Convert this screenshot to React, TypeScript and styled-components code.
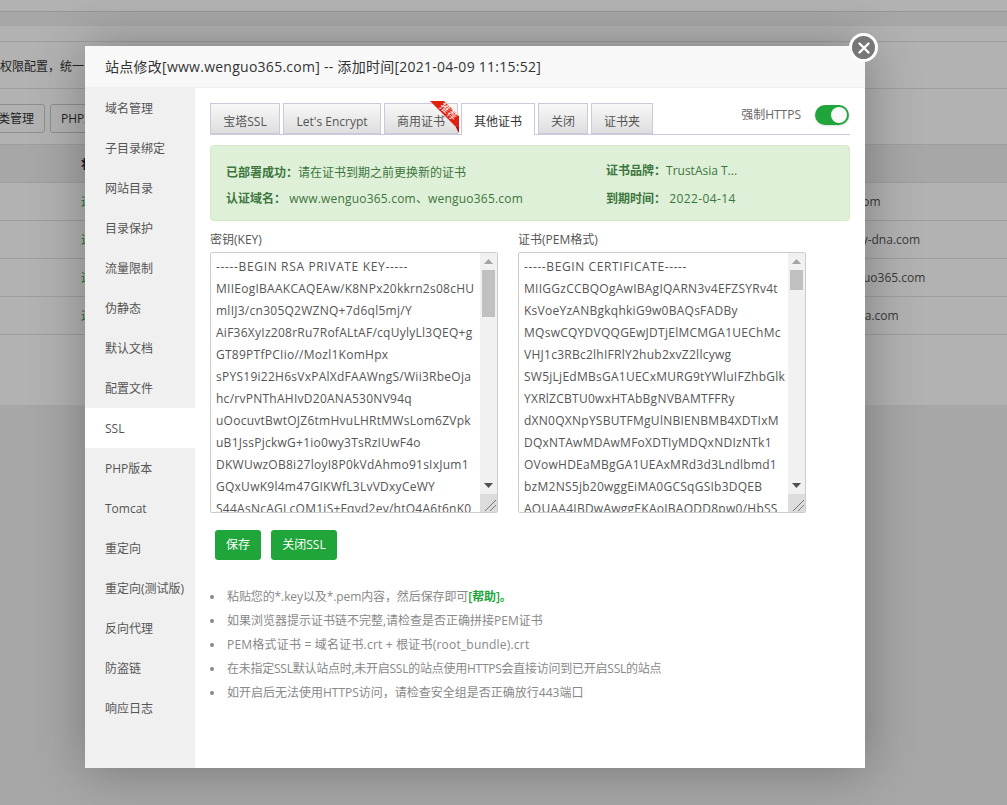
import React from "react";
import styled, { createGlobalStyle } from "styled-components";

const FONT = `"Open Sans", "Noto Sans CJK SC", sans-serif`;

const Global = createGlobalStyle`
  * { box-sizing: border-box; }
  html, body { margin: 0; padding: 0; background: #fff; }
  body { font-family: ${FONT}; font-size: 12px; color: #555; }
`;

const Page = styled.div`
  position: relative;
  height: 805px;
  overflow: hidden;
  background: #f0f0f0;
`;
const TopBar = styled.div`
  height: 12px;
  background: #fff;
  border-bottom: 1px solid #d8d8d8;
`;
const Crumb = styled.div`
  height: 14px;
  background: #f0f0f0;
`;
const SubBar = styled.div`
  height: 15px;
  background: #fff;
`;
const Content = styled.div`
  background: #fff;
  height: 364px;
`;
const Notice = styled.div`
  height: 48px;
  border-top: 1px solid #e2e2e2;
  border-bottom: 1px solid #e2e2e2;
  line-height: 49px;
  color: #333;
  white-space: nowrap;
`;
const Toolbar = styled.div`
  display: flex;
  gap: 5px;
  height: 55px;
  padding-top: 15px;
`;
const GhostButton = styled.div<{ $shift?: number }>`
  height: 29px;
  padding: 0 10px;
  margin-left: ${(p) => p.$shift ?? 0}px;
  border: 1px solid #ccc;
  border-radius: 3px;
  line-height: 27px;
  color: #333;
  white-space: nowrap;
`;
const HeadRow = styled.div`
  display: flex;
  height: 39px;
  padding-left: 81px;
  background: #f0f0f0;
  border-top: 1px solid #e2e2e2;
  border-bottom: 1px solid #e2e2e2;
  line-height: 39px;
  color: #224;
  font-weight: 600;
`;
const Row = styled.div`
  display: grid;
  grid-template-columns: 721px 1fr;
  height: 38px;
  padding-left: 81px;
  border-bottom: 1px solid #e2e2e2;
  line-height: 37px;
  white-space: nowrap;
`;
const RowStatus = styled.span`
  color: #20a53a;
`;
const RowDomain = styled.span`
  color: #555;
`;

const Overlay = styled.div`
  position: absolute;
  inset: 0;
  background: rgba(0, 0, 0, 0.3);
`;
const Modal = styled.div`
  position: absolute;
  left: 85px;
  top: 46px;
  width: 780px;
  height: 722px;
  background: #fff;
  box-shadow: 1px 1px 50px rgba(0, 0, 0, 0.3);
  display: flex;
  flex-direction: column;
`;
const Close = styled.div`
  position: absolute;
  right: -13px;
  top: -13px;
  width: 29px;
  height: 29px;
  border-radius: 50%;
  border: 3px solid #fff;
  background: #777;
  display: flex;
  align-items: center;
  justify-content: center;
`;
const Header = styled.div`
  height: 42px;
  flex: none;
  padding-left: 20px;
  background: #f8f8f8;
  border-bottom: 1px solid #eee;
  font-size: 14px;
  line-height: 41px;
  letter-spacing: 0.26px;
  color: #333;
  white-space: nowrap;
`;
const Body = styled.div`
  flex: 1;
  display: flex;
  min-height: 0;
`;
const Side = styled.div`
  width: 110px;
  flex: none;
  background: #f0f0f0;
`;
const SideItem = styled.div<{ $active?: boolean }>`
  height: 40px;
  padding-left: 20px;
  line-height: 42px;
  color: #555;
  background: ${(p) => (p.$active ? "#fff" : "transparent")};
`;
const Main = styled.div`
  flex: 1;
  min-width: 0;
  padding: 15px 15px 0;
`;
const Tabs = styled.div`
  display: flex;
  gap: 3px;
  height: 32px;
  border-bottom: 1px solid #ccc9dc;
`;
const Tab = styled.div<{ $active?: boolean; $w: number }>`
  position: relative;
  width: ${(p) => p.$w}px;
  height: ${(p) => (p.$active ? 32 : 31)}px;
  border: 1px solid #ccc9dc;
  border-bottom: ${(p) => (p.$active ? "none" : "1px solid #ccc9dc")};
  background: ${(p) => (p.$active ? "#fff" : "linear-gradient(#f8f8f8, #dedede)")};
  color: ${(p) => (p.$active ? "#333" : "#555")};
  text-align: center;
  line-height: 35px;
  white-space: nowrap;
`;
const Ribbon = styled.svg`
  position: absolute;
  right: -4px;
  top: -4px;
  width: 33px;
  height: 35px;
`;
const ForceHttps = styled.div`
  margin-left: auto;
  margin-right: 1px;
  display: flex;
  gap: 14px;
  height: 30px;
  align-items: flex-start;
  color: #666;
  line-height: 24px;
`;
const Switch = styled.div`
  position: relative;
  width: 34px;
  height: 20px;
  margin-top: 2px;
  border-radius: 20px;
  background: #20a53a;
  box-shadow: 0 1px 2px rgba(0, 0, 0, 0.15);
`;
const Knob = styled.span`
  position: absolute;
  right: 2px;
  top: 2px;
  width: 16px;
  height: 16px;
  border-radius: 50%;
  background: #fafafa;
`;
const Alert = styled.div`
  display: grid;
  grid-template-columns: 380px 1fr;
  height: 76px;
  margin-top: 10px;
  padding: 0 15px;
  background: #dff0d8;
  border: 1px solid #d6e9c6;
  border-radius: 4px;
  color: #3c763d;
  line-height: 26px;
  white-space: nowrap;
`;
const AlertCol = styled.div<{ $top: number }>`
  padding-top: ${(p) => p.$top}px;
`;
const AlertLine = styled.div<{ $h: number }>`
  height: ${(p) => p.$h}px;
`;
const AlertValue = styled.span<{ $tracking: number }>`
  letter-spacing: ${(p) => p.$tracking}px;
`;
const Editors = styled.div`
  display: flex;
  gap: 20px;
  margin-top: 9px;
`;
const Editor = styled.div`
  width: 288px;
`;
const EditorLabel = styled.div`
  height: 22px;
  line-height: 20px;
  color: #555;
`;
const PemBox = styled.div`
  position: relative;
  width: 288px;
  height: 261px;
  padding: 3px 22px 0 5px;
  border: 1px solid #ccc;
  border-radius: 2px;
  overflow: hidden;
  background: #fff;
`;
const PemLine = styled.div<{ $tracking: number }>`
  height: 22px;
  line-height: 22px;
  letter-spacing: ${(p) => p.$tracking}px;
  color: #555;
  white-space: nowrap;
`;
const Scroll = styled.div`
  position: absolute;
  right: 0;
  top: 0;
  bottom: 0;
  width: 17px;
  display: flex;
  flex-direction: column;
  background: #f1f1f1;
`;
const ScrollArrow = styled.div`
  height: 17px;
  flex: none;
  display: flex;
  align-items: center;
  justify-content: center;
`;
const ScrollTrack = styled.div`
  flex: 1;
  padding: 0 2px;
`;
const ScrollThumb = styled.div<{ $h: number }>`
  height: ${(p) => p.$h}px;
  background: #c1c1c1;
`;
const ScrollCorner = styled.div`
  height: 18px;
  flex: none;
  background: #dcdcdc;
  display: flex;
  align-items: flex-end;
  justify-content: flex-end;
`;
const Actions = styled.div`
  display: flex;
  gap: 10px;
  margin-top: 17px;
  padding-left: 5px;
`;
const Primary = styled.div<{ $w: number }>`
  width: ${(p) => p.$w}px;
  height: 30px;
  border-radius: 3px;
  background: #20a53a;
  color: #fff;
  text-align: center;
  line-height: 30px;
  white-space: nowrap;
`;
const Tips = styled.ul`
  margin: 25px 0 0;
  padding: 0;
  list-style: none;
  color: #888;
`;
const Tip = styled.li<{ $tracking?: number }>`
  height: 24px;
  line-height: 24px;
  white-space: nowrap;
  letter-spacing: ${(p) => p.$tracking ?? 0}px;

  &::before {
    content: "";
    display: inline-block;
    width: 4px;
    height: 4px;
    margin: 0 13px 1px 0;
    border-radius: 50%;
    background: #888;
    vertical-align: middle;
  }
`;
const Help = styled.span`
  color: #20a53a;
  font-weight: 600;
`;

type Line = [string, number];
const T = 0.26;
const keyLines: Line[] = [
  ["-----BEGIN RSA PRIVATE KEY-----", 0.65],
  ["MIIEogIBAAKCAQEAw/K8NPx20kkrn2s08cHU", T],
  ["mlIJ3/cn305Q2WZNQ+7d6ql5mj/Y", T],
  ["AiF36XyIz208rRu7RofALtAF/cqUylyLl3QEQ+g", T],
  ["GT89PTfPCIio//Mozl1KomHpx", T],
  ["sPYS19i22H6sVxPAlXdFAAWngS/Wii3RbeOja", T],
  ["hc/rvPNThAHIvD20ANA530NV94q", T],
  ["uOocuvtBwtOJZ6tmHvuLHRtMWsLom6ZVpk", T],
  ["uB1JssPjckwG+1io0wy3TsRzIUwF4o", T],
  ["DKWUwzOB8i27loyI8P0kVdAhmo91sIxJum1", T],
  ["GQxUwK9l4m47GIKWfL3LvVDxyCeWY", T],
  ["S44AsNcAGLcOM1iS+Fqvd2ey/htO4A6t6nK0", T],
];
const certLines: Line[] = [
  ["-----BEGIN CERTIFICATE-----", 0.6],
  ["MIIGGzCCBQOgAwIBAgIQARN3v4EFZSYRv4t", T],
  ["KsVoeYzANBgkqhkiG9w0BAQsFADBy", T],
  ["MQswCQYDVQQGEwJDTjElMCMGA1UEChMc", T],
  ["VHJ1c3RBc2lhIFRlY2hub2xvZ2llcywg", T],
  ["SW5jLjEdMBsGA1UECxMURG9tYWluIFZhbGlk", T],
  ["YXRlZCBTU0wxHTAbBgNVBAMTFFRy", T],
  ["dXN0QXNpYSBUTFMgUlNBIENBMB4XDTIxM", T],
  ["DQxNTAwMDAwMFoXDTIyMDQxNDIzNTk1", T],
  ["OVowHDEaMBgGA1UEAxMRd3d3Lndlbmd1", T],
  ["bzM2NS5jb20wggEiMA0GCSqGSIb3DQEB", T],
  ["AQUAA4IBDwAwggEKAoIBAQDD8pw0/HbSS", T],
];

const sideItems = ["域名管理","子目录绑定","网站目录","目录保护","流量限制","伪静态","默认文档","配置文件","SSL","PHP版本","Tomcat","重定向","重定向(测试版)","反向代理","防盗链","响应日志"];
const tabs: [string, number][] = [["宝塔SSL",70],["Let's Encrypt",98],["商用证书",74],["其他证书",74],["关闭",50],["证书夹",62]];
const domains = ["wenguo1.com","www.nuoay-dna.com","www.wenguo365.com","www.gemna.com"];

function Pem({ lines, thumb }: { lines: Line[]; thumb: number }) {
  return (
    <PemBox>
      {lines.map(([text, tracking]) => (
        <PemLine key={text} $tracking={tracking}>{text}</PemLine>
      ))}
      <Scroll>
        <ScrollArrow>
          <svg width="9" height="5" viewBox="0 0 9 5"><path d="M4.5 0L9 5H0z" fill="#a3a3a3" /></svg>
        </ScrollArrow>
        <ScrollTrack><ScrollThumb $h={thumb} /></ScrollTrack>
        <ScrollArrow>
          <svg width="9" height="5" viewBox="0 0 9 5"><path d="M0 0H9L4.5 5z" fill="#505050" /></svg>
        </ScrollArrow>
        <ScrollCorner>
          <svg width="13" height="13" viewBox="0 0 13 13">
            <path d="M1 12L12 1M6 12L12 6" stroke="#777" fill="none" />
          </svg>
        </ScrollCorner>
      </Scroll>
    </PemBox>
  );
}

export default function App() {
  return (
    <Page>
      <Global />
      <TopBar />
      <Crumb />
      <SubBar />
      <Content>
        <Notice>权限配置，统一</Notice>
        <Toolbar>
          <GhostButton $shift={-25}>分类管理</GhostButton>
          <GhostButton>PHP版本管理</GhostButton>
        </Toolbar>
        <HeadRow>状态</HeadRow>
        {domains.map((d) => (
          <Row key={d}>
            <RowStatus>运行中</RowStatus>
            <RowDomain>{d}</RowDomain>
          </Row>
        ))}
      </Content>
      <Overlay />
      <Modal>
        <Close>
          <svg width="14" height="14" viewBox="0 0 14 14">
            <path d="M2.5 2.5L11.5 11.5M11.5 2.5L2.5 11.5" stroke="#fff" strokeWidth="2.4" strokeLinecap="round" />
          </svg>
        </Close>
        <Header>站点修改[www.wenguo365.com] -- 添加时间[2021-04-09 11:15:52]</Header>
        <Body>
          <Side>
            {sideItems.map((s) => (
              <SideItem key={s} $active={s === "SSL"}>{s}</SideItem>
            ))}
          </Side>
          <Main>
            <Tabs>
              {tabs.map(([t, w]) => (
                <Tab key={t} $w={w} $active={t === "其他证书"}>
                  {t}
                  {t === "商用证书" && (
                    <Ribbon viewBox="0 0 33 35">
                      <path d="M2 1H16L31 16V33L28 27Z" fill="#e0210f" />
                      <path d="M28 27L31 27V33Z" fill="#a81208" />
                      <text x="0" y="3.5" fill="#fff" fontSize="10" fontFamily="Noto Sans CJK SC" textAnchor="middle" transform="translate(20.5 11.5) rotate(45)">推荐</text>
                    </Ribbon>
                  )}
                </Tab>
              ))}
              <ForceHttps>
                强制HTTPS
                <Switch><Knob /></Switch>
              </ForceHttps>
            </Tabs>
            <Alert>
              <AlertCol $top={14}>
                <AlertLine $h={26}><b>已部署成功：</b>请在证书到期之前更换新的证书</AlertLine>
                <AlertLine $h={26}><b>认证域名：</b> <AlertValue $tracking={0.2}>www.wenguo365.com、wenguo365.com</AlertValue></AlertLine>
              </AlertCol>
              <AlertCol $top={12}>
                <AlertLine $h={28}><b>证书品牌：</b>TrustAsia T...</AlertLine>
                <AlertLine $h={26}><b>到期时间：</b> <AlertValue $tracking={0.4}>2022-04-14</AlertValue></AlertLine>
              </AlertCol>
            </Alert>
            <Editors>
              <Editor>
                <EditorLabel>密钥(KEY)</EditorLabel>
                <Pem lines={keyLines} thumb={47} />
              </Editor>
              <Editor>
                <EditorLabel>证书(PEM格式)</EditorLabel>
                <Pem lines={certLines} thumb={20} />
              </Editor>
            </Editors>
            <Actions>
              <Primary $w={46}>保存</Primary>
              <Primary $w={66}>关闭SSL</Primary>
            </Actions>
            <Tips>
              <Tip $tracking={-0.1}>粘贴您的*.key以及*.pem内容，然后保存即可<Help>[帮助]。</Help></Tip>
              <Tip>如果浏览器提示证书链不完整,请检查是否正确拼接PEM证书</Tip>
              <Tip $tracking={0.2}>PEM格式证书 = 域名证书.crt + 根证书(root_bundle).crt</Tip>
              <Tip $tracking={-0.25}>在未指定SSL默认站点时,未开启SSL的站点使用HTTPS会直接访问到已开启SSL的站点</Tip>
              <Tip>如开启后无法使用HTTPS访问，请检查安全组是否正确放行443端口</Tip>
            </Tips>
          </Main>
        </Body>
      </Modal>
    </Page>
  );
}
